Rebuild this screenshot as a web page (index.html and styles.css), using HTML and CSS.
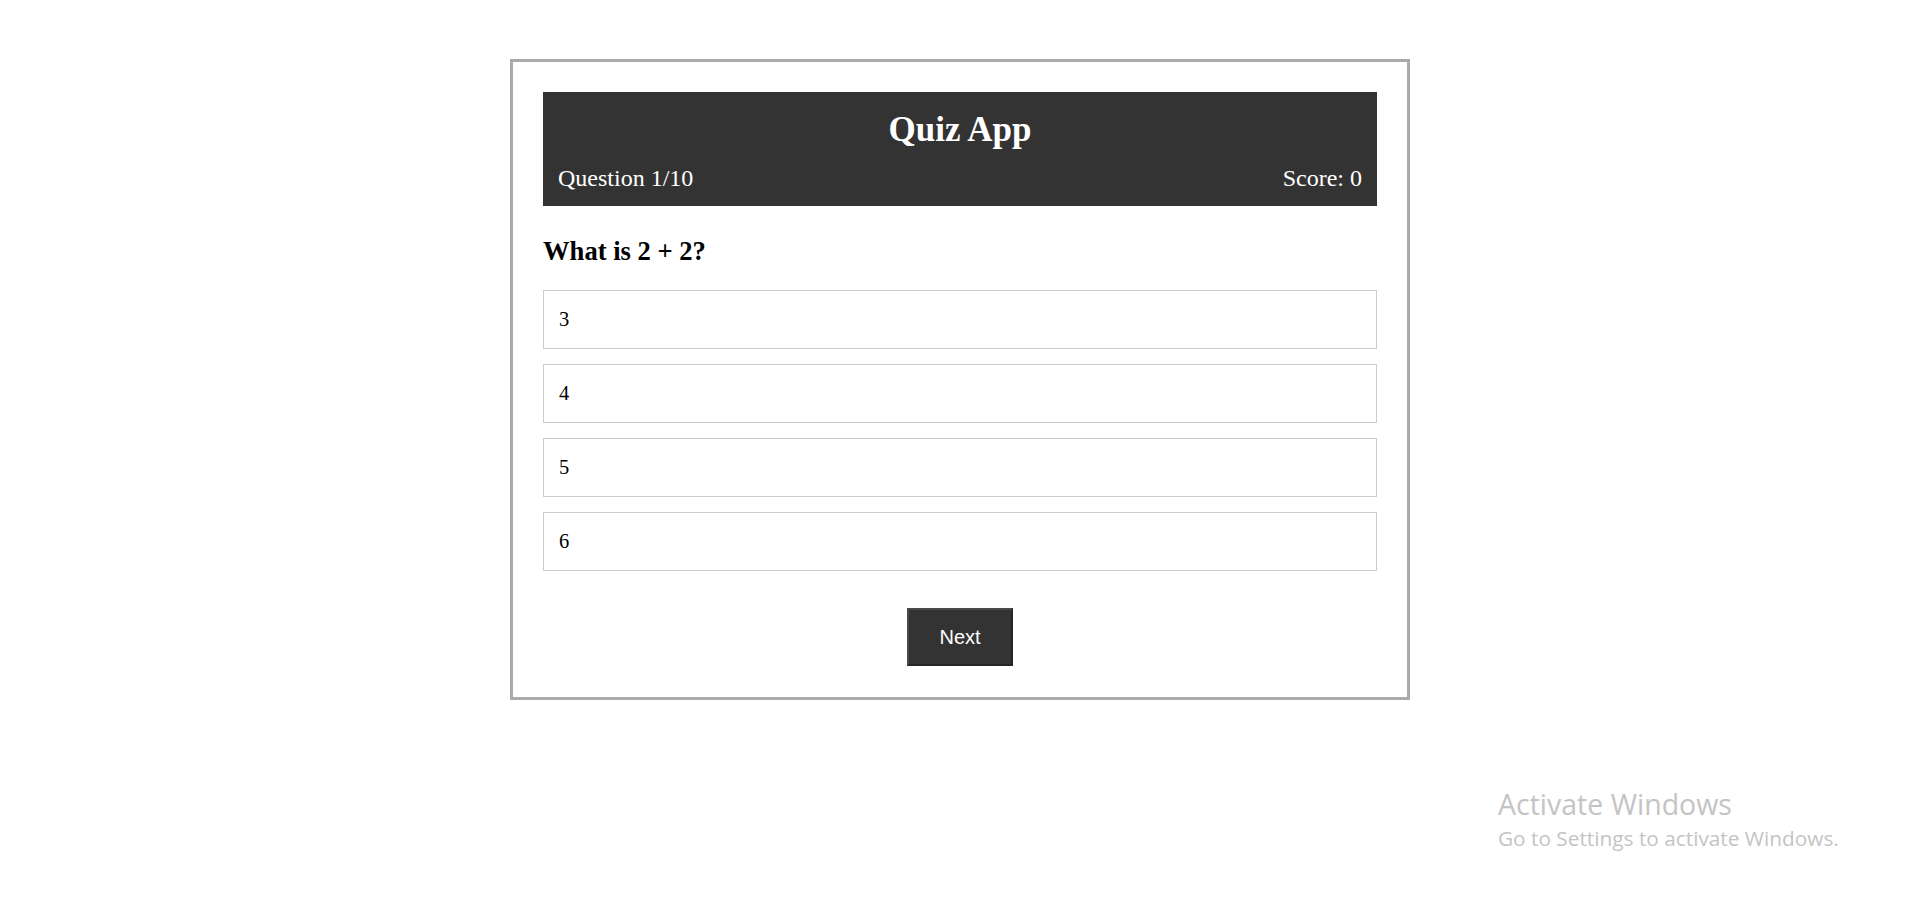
FILE: index.html
```html
<!DOCTYPE html>
<html lang="en">
<head>
<meta charset="utf-8">
<title>Quiz App</title>
<link rel="stylesheet" href="styles.css">
</head>
<body>
<div class="quiz">
  <header class="quiz-header">
    <h1 class="quiz-title">Quiz App</h1>
    <div class="quiz-meta">
      <span class="quiz-progress">Question 1/10</span>
      <span class="quiz-score">Score: 0</span>
    </div>
  </header>
  <h2 class="question">What is 2 + 2?</h2>
  <ul class="options">
    <li class="option">3</li>
    <li class="option">4</li>
    <li class="option">5</li>
    <li class="option">6</li>
  </ul>
  <div class="actions">
    <button class="next-btn" type="button">Next</button>
  </div>
</div>
<div class="watermark">
  <div class="watermark-title">Activate Windows</div>
  <div class="watermark-sub">Go to Settings to activate Windows.</div>
</div>
</body>
</html>
```
FILE: styles.css
```css
html, body {
  margin: 0;
  padding: 0;
  background: #ffffff;
}

body {
  font-family: "Liberation Serif", "Times New Roman", serif;
  color: #000;
  padding-top: 59px;
}

.quiz {
  box-sizing: border-box;
  width: 900px;
  margin: 0 auto;
  border: 3px solid #aaaaaa;
  padding: 30px 30px 31px;
  background: #fff;
}

.quiz-header {
  background: #333333;
  color: #ffffff;
  padding: 18px 15px 14px;
}

.quiz-title {
  margin: 0 0 15px;
  text-align: center;
  font-size: 35px;
  font-weight: bold;
  line-height: normal;
}

.quiz-meta {
  display: flex;
  justify-content: space-between;
  font-size: 24px;
  line-height: normal;
}

.question {
  margin: 30px 0 23px;
  font-size: 26.6px;
  font-weight: bold;
  line-height: normal;
}

.options {
  list-style: none;
  margin: 0;
  padding: 0;
  display: flex;
  flex-direction: column;
  gap: 15px;
}

.option {
  border: 1px solid #cccccc;
  padding: 17px 15px;
  font-size: 20.5px;
  line-height: 23px;
}

.actions {
  display: flex;
  justify-content: center;
  margin-top: 37px;
}

.next-btn {
  font-family: "Liberation Sans", Arial, sans-serif;
  font-size: 20px;
  line-height: 23px;
  color: #ffffff;
  background: #333333;
  padding: 15px 30px;
  border-style: solid;
  border-width: 2px;
  border-color: #4a4a4a #262626 #262626 #4a4a4a;
  width: 106px;
  height: 58px;
  box-sizing: border-box;
}

.watermark {
  position: absolute;
  left: 1498px;
  top: 786px;
  color: #c4c4c4;
  font-family: "Open Sans", "Noto Sans", sans-serif;
  pointer-events: none;
}

.watermark-title {
  font-size: 28.5px;
  line-height: 36px;
}

.watermark-sub {
  margin-top: 3px;
  font-size: 20.8px;
  line-height: 26px;
}
```
